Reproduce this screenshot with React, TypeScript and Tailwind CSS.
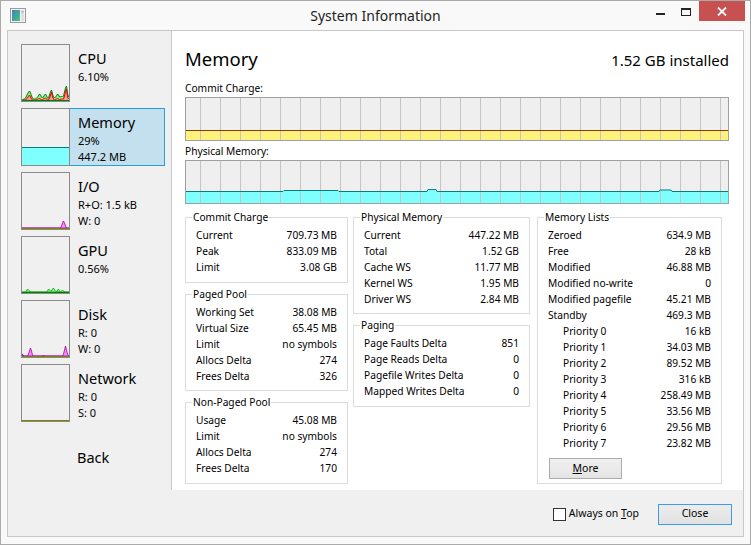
import React from "react";

type Row = [string, string, boolean?];

const commitRows: Row[] = [
  ["Current", "709.73 MB"],
  ["Peak", "833.09 MB"],
  ["Limit", "3.08 GB"],
];
const pagedRows: Row[] = [
  ["Working Set", "38.08 MB"],
  ["Virtual Size", "65.45 MB"],
  ["Limit", "no symbols"],
  ["Allocs Delta", "274"],
  ["Frees Delta", "326"],
];
const nonPagedRows: Row[] = [
  ["Usage", "45.08 MB"],
  ["Limit", "no symbols"],
  ["Allocs Delta", "274"],
  ["Frees Delta", "170"],
];
const physRows: Row[] = [
  ["Current", "447.22 MB"],
  ["Total", "1.52 GB"],
  ["Cache WS", "11.77 MB"],
  ["Kernel WS", "1.95 MB"],
  ["Driver WS", "2.84 MB"],
];
const pagingRows: Row[] = [
  ["Page Faults Delta", "851"],
  ["Page Reads Delta", "0"],
  ["Pagefile Writes Delta", "0"],
  ["Mapped Writes Delta", "0"],
];
const listRows: Row[] = [
  ["Zeroed", "634.9 MB"],
  ["Free", "28 kB"],
  ["Modified", "46.88 MB"],
  ["Modified no-write", "0"],
  ["Modified pagefile", "45.21 MB"],
  ["Standby", "469.3 MB"],
  ["Priority 0", "16 kB", true],
  ["Priority 1", "34.03 MB", true],
  ["Priority 2", "89.52 MB", true],
  ["Priority 3", "316 kB", true],
  ["Priority 4", "258.49 MB", true],
  ["Priority 5", "33.56 MB", true],
  ["Priority 6", "29.56 MB", true],
  ["Priority 7", "23.82 MB", true],
];

// little area path for the thumbnails, one value per pixel column
const area = (vals: number[], h: number) => {
  let d = `M0 ${h}`;
  vals.forEach((v, i) => {
    d += ` L${i + 0.5} ${h - v}`;
  });
  d += ` L${vals.length} ${h} Z`;
  return d;
};
const line = (vals: number[], h: number) =>
  vals.map((v, i) => `${i === 0 ? "M" : "L"}${i + 0.5} ${h - v}`).join(" ");

const cpuTotal = [0, 1, 1, 2, 4, 6, 8, 9, 7, 4, 2, 1, 1, 1, 2, 3, 4, 6, 5, 3, 2, 3, 5, 6, 4, 2, 2, 5, 8, 10, 6, 3, 2, 3, 4, 6, 5, 3, 3, 4, 3, 4, 8, 12, 14, 7, 3];
const cpuKernel = [0, 0, 0, 0, 1, 2, 4, 5, 3, 1, 0, 0, 0, 0, 0, 1, 1, 2, 1, 0, 0, 1, 2, 2, 1, 0, 0, 2, 5, 8, 3, 1, 0, 1, 1, 2, 1, 0, 1, 1, 1, 1, 4, 9, 11, 3, 1];
const gpuVals = [0, 0, 0, 0, 1, 3, 2, 1, 0, 0, 0, 0, 0, 0, 0, 0, 0, 0, 0, 0, 0, 0, 0, 0, 0, 1, 3, 2, 1, 1, 3, 4, 2, 1, 0, 2, 3, 1, 0, 1, 2, 1, 0, 0, 0, 0, 0];
const ioVals = Array.from({ length: 47 }, (_, i) => (i >= 39 && i <= 43 ? [2, 5, 7, 5, 2][i - 39] : 0));
const diskVals = Array.from({ length: 47 }, (_, i) =>
  i === 0 ? 2 : i >= 6 && i <= 10 ? [2, 5, 8, 5, 1][i - 6] : i === 21 ? 1 : i >= 41 && i <= 45 ? [2, 6, 10, 6, 2][i - 41] : 0
);

function Thumb({ kind }: { kind: string }) {
  const h = 56;
  return (
    <svg width="47" height="56" className="block">
      {kind === "cpu" && (
        <>
          <path d={area(cpuTotal, 55)} fill="#88ff88" />
          <path d={line(cpuTotal, 55)} fill="none" stroke="#008000" strokeWidth="1" />
          <path d={area(cpuKernel, 55)} fill="#ff9a9a" />
          <path d={line(cpuKernel, 55)} fill="none" stroke="#e00000" strokeWidth="1" />
          <line x1="0" y1="55.5" x2="47" y2="55.5" stroke="#008000" />
        </>
      )}
      {kind === "mem" && (
        <>
          <rect x="0" y="38" width="47" height="18" fill="#80ffff" />
          <line x1="0" y1="38.5" x2="47" y2="38.5" stroke="#008080" />
        </>
      )}
      {kind === "io" && (
        <>
          <path d={area(ioVals, 55)} fill="#ff88ff" stroke="#a000a0" strokeWidth="0.8" />
          <line x1="0" y1="55.5" x2="47" y2="55.5" stroke="#808000" />
        </>
      )}
      {kind === "gpu" && (
        <>
          <path d={area(gpuVals, 55)} fill="#88ff88" stroke="#00a000" strokeWidth="0.8" />
          <line x1="0" y1="55.5" x2="47" y2="55.5" stroke="#008000" />
        </>
      )}
      {kind === "disk" && (
        <>
          <path d={area(diskVals, 55)} fill="#ff88ff" stroke="#a000a0" strokeWidth="0.8" />
          <line x1="0" y1="55.5" x2="47" y2="55.5" stroke="#808000" />
        </>
      )}
      {kind === "net" && <line x1="0" y1={h - 0.5} x2="47" y2={h - 0.5} stroke="#808000" />}
    </svg>
  );
}

function SideItem({ title, lines, kind, selected }: { title: string; lines: string[]; kind: string; selected?: boolean }) {
  return (
    <div className={`flex h-[58px] w-[144px] ${selected ? "bg-[#c4e0ee] shadow-[inset_0_0_0_1px_#26a0da]" : ""}`}>
      <div className="h-[58px] w-[49px] shrink-0 border border-[#8a8a8a] bg-[#f0f0f0]">
        <Thumb kind={kind} />
      </div>
      <div className="pl-[8px] pt-[3px] text-black">
        <div className="text-[14.5px] leading-[22px]">{title}</div>
        {lines.map((l) => (
          <div key={l} className="text-[11px] leading-[16px]">
            {l}
          </div>
        ))}
      </div>
    </div>
  );
}

function BigGraph({ kind }: { kind: "commit" | "phys" }) {
  const grid = Array.from({ length: 27 }, (_, i) => 15.5 + i * 20);
  const pts: [number, number][] =
    kind === "commit"
      ? [
          [1, 33.5],
          [543, 33.5],
        ]
      : [
          [1, 31.5], [98, 31.5], [99, 30.5], [153, 30.5], [154, 31.5], [242, 31.5], [243, 29.5],
          [251, 29.5], [252, 31.5], [474, 31.5], [475, 30], [486, 30], [487, 31.5], [543, 31.5],
        ];
  const fill = kind === "commit" ? "#fff27c" : "#80ffff";
  const stroke = kind === "commit" ? "#8a3a00" : "#007f7f";
  const top = pts.map(([x, y], i) => `${i ? "L" : "M"}${x} ${y}`).join(" ");
  return (
    <svg width="544" height="44" className="block">
      <rect x="0" y="0" width="544" height="44" fill="#efefef" />
      <path d={`${top} L543 43 L1 43 Z`} fill={fill} />
      {grid.map((x) => (
        <line key={x} x1={x} y1="1" x2={x} y2="43" stroke="#c4c4c4" />
      ))}
      <path d={top} fill="none" stroke={stroke} strokeWidth="1" />
      <rect x="0.5" y="0.5" width="543" height="43" fill="none" stroke="#a0a0a0" />
    </svg>
  );
}

function Group({ title, rows, pb, children }: { title: string; rows: Row[]; pb: string; children?: React.ReactNode }) {
  return (
    <fieldset className={`border border-[#dcdcdc] pt-[3px] ${pb}`}>
      <legend className="ml-[6px] px-[1px] text-[10.2px] leading-[14px] text-black">{title}</legend>
      {rows.map(([k, v, indent]) => (
        <div key={k} className={`flex justify-between pr-[10px] text-[10.2px] leading-[16px] text-black ${indent ? "pl-[25px]" : "pl-[10px]"}`}>
          <span>{k}</span>
          <span>{v}</span>
        </div>
      ))}
      {children}
    </fieldset>
  );
}

export default function App() {
  return (
    <div className="flex h-[545px] w-[751px] flex-col border border-[#aaaaaa] bg-[#f9f9f9] font-['Segoe_UI','Noto_Sans',sans-serif]">
      {/* title bar */}
      <div className="grid h-[29px] grid-cols-[1fr_auto_1fr]">
        <div className="flex items-center pl-[9px]">
          <svg width="16" height="15" viewBox="0 0 16 15">
            <defs>
              <linearGradient id="ic" x1="0" y1="0" x2="1" y2="1">
                <stop offset="0" stopColor="#3b7fc4" />
                <stop offset="1" stopColor="#4fc37a" />
              </linearGradient>
            </defs>
            <rect x="0.5" y="0.5" width="15" height="14" fill="#f4f4f4" stroke="#9a9a9a" />
            <rect x="2" y="2" width="8" height="11" fill="url(#ic)" />
            <rect x="11" y="2" width="3" height="11" fill="#e0e0e0" />
            <line x1="11.5" y1="4" x2="13.5" y2="4" stroke="#6ba0c8" />
          </svg>
        </div>
        <div className="flex items-center text-[14px] text-[#1e1e1e]">System Information</div>
        <div className="flex items-start justify-end pr-[5px]">
          <div className="flex h-[20px] w-[26px] justify-center">
            <div className="mt-[12px] h-[2px] w-[9px] bg-[#222]" />
          </div>
          <div className="flex h-[20px] w-[26px] justify-center">
            <div className="mt-[7px] h-[8px] w-[10px] border border-t-2 border-[#222]" />
          </div>
          <div className="flex h-[20px] w-[46px] items-center justify-center bg-[#c75050]">
            <svg width="10" height="9" viewBox="0 0 10 9">
              <path d="M1 0.5 L9 8.5 M9 0.5 L1 8.5" stroke="#fff" strokeWidth="1.8" />
            </svg>
          </div>
        </div>
      </div>

      {/* client */}
      <div className="mx-[6px] mb-[7px] flex flex-1 flex-col border border-[#c8c8c8] bg-[#f0f0f0]">
        <div className="flex h-[459px]">
          {/* sidebar */}
          <div className="flex w-[164px] shrink-0 flex-col border-r border-[#c8c8c8] pl-[13px] pt-[13px]">
            <div className="flex flex-col gap-[6px]">
              <SideItem title="CPU" lines={["6.10%"]} kind="cpu" />
              <SideItem title="Memory" lines={["29%", "447.2 MB"]} kind="mem" selected />
              <SideItem title="I/O" lines={["R+O: 1.5 kB", "W: 0"]} kind="io" />
              <SideItem title="GPU" lines={["0.56%"]} kind="gpu" />
              <SideItem title="Disk" lines={["R: 0", "W: 0"]} kind="disk" />
              <SideItem title="Network" lines={["R: 0", "S: 0"]} kind="net" />
            </div>
            <div className="mt-[24px] pl-[56px] text-[14.5px] leading-[22px] text-black">Back</div>
          </div>

          {/* main panel */}
          <div className="flex-1 bg-white pl-[13px] pr-[13px] pt-[16px]">
            <div className="flex items-baseline justify-between pr-[1px]">
              <div className="text-[18.5px] leading-[24px] text-black">Memory</div>
              <div className="text-[15px] leading-[24px] text-black">1.52 GB installed</div>
            </div>
            <div className="mt-[9px] text-[10.2px] leading-[14px] text-black">Commit Charge:</div>
            <div className="mt-[2px]">
              <BigGraph kind="commit" />
            </div>
            <div className="mt-[3px] text-[10.2px] leading-[14px] text-black">Physical Memory:</div>
            <div className="mt-[2px]">
              <BigGraph kind="phys" />
            </div>

            <div className="mt-[6px] flex">
              <div className="flex w-[163px] flex-col gap-[4px]">
                <Group title="Commit Charge" rows={commitRows} pb="pb-[7px]" />
                <Group title="Paged Pool" rows={pagedRows} pb="pb-[6px]" />
                <Group title="Non-Paged Pool" rows={nonPagedRows} pb="pb-[7px]" />
              </div>
              <div className="ml-[5px] flex w-[177px] flex-col gap-[4px]">
                <Group title="Physical Memory" rows={physRows} pb="pb-[6px]" />
                <Group title="Paging" rows={pagingRows} pb="pb-[7px]" />
              </div>
              <div className="ml-[7px] flex w-[185px] flex-col">
                <Group title="Memory Lists" rows={listRows} pb="pb-[4px]">
                  <div className="ml-[11px] mt-[7px] flex h-[21px] w-[73px] items-center justify-center border border-[#acacac] bg-gradient-to-b from-[#f0f0f0] to-[#e5e5e5] text-[10.5px] text-black">
                    <span>
                      <span className="underline">M</span>ore
                    </span>
                  </div>
                </Group>
              </div>
            </div>
          </div>
        </div>

        {/* bottom bar */}
        <div className="flex flex-1 items-center justify-end pr-[11px] pt-[2px]">
          <div className="flex items-center">
            <div className="h-[13px] w-[13px] border border-[#333] bg-white" />
            <span className="ml-[3px] text-[10.5px] text-black">
              Always on <span className="underline">T</span>op
            </span>
          </div>
          <div className="ml-[19px] flex h-[21px] w-[74px] items-center justify-center border border-[#3c9cf0] bg-gradient-to-b from-[#ececec] to-[#e2e2e2] text-[10.5px] text-black">
            Close
          </div>
        </div>
      </div>
    </div>
  );
}
